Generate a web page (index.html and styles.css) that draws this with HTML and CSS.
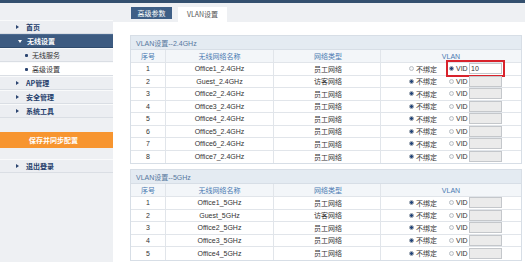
FILE: index.html
```html
<!DOCTYPE html>
<html lang="zh-CN">
<head>
<meta charset="utf-8">
<title>VLAN设置</title>
<link rel="stylesheet" href="styles.css">
</head>
<body>
<div class="topbar"></div>
<div class="layout">
  <aside class="sidebar">
    <nav class="menu">
      <div class="item"><span class="tri-r"></span>首页</div>
      <div class="item active"><span class="tri-d"></span>无线设置</div>
      <div class="sub"><span class="dot"></span>无线服务</div>
      <div class="sub current"><span class="dot"></span>高级设置</div>
      <div class="item"><span class="tri-r"></span>AP管理</div>
      <div class="item"><span class="tri-r"></span>安全管理</div>
      <div class="item"><span class="tri-r"></span>系统工具</div>
    </nav>
    <div class="save">保存并同步配置</div>
    <nav class="menu">
      <div class="item"><span class="tri-r"></span>退出登录</div>
    </nav>
  </aside>
  <main class="main">
    <div class="tabs">
      <span class="tab tab-dark">高级参数</span>
      <span class="tab tab-on">VLAN设置</span>
    </div>
    <div class="content">
      <section class="panel">
        <div class="ptitle">VLAN设置--2.4GHz</div>
        <div class="grid">
          <div class="row head"><span>序号</span><span>无线网络名称</span><span class="type">网络类型</span><span>VLAN</span></div>
          <div class="row"><span>1</span><span>Office1_2.4GHz</span><span class="type">员工网络</span><span class="vlan"><i class="radio"></i><em>不绑定</em><span class="vid hl"><i class="radio on"></i><em>VID</em><input class="box white" type="text" value="10"></span></span></div>
          <div class="row"><span>2</span><span>Guest_2.4GHz</span><span class="type">访客网络</span><span class="vlan"><i class="radio on"></i><em>不绑定</em><span class="vid"><i class="radio"></i><em>VID</em><input class="box" type="text"></span></span></div>
          <div class="row"><span>3</span><span>Office2_2.4GHz</span><span class="type">员工网络</span><span class="vlan"><i class="radio on"></i><em>不绑定</em><span class="vid"><i class="radio"></i><em>VID</em><input class="box" type="text"></span></span></div>
          <div class="row"><span>4</span><span>Office3_2.4GHz</span><span class="type">员工网络</span><span class="vlan"><i class="radio on"></i><em>不绑定</em><span class="vid"><i class="radio"></i><em>VID</em><input class="box" type="text"></span></span></div>
          <div class="row"><span>5</span><span>Office4_2.4GHz</span><span class="type">员工网络</span><span class="vlan"><i class="radio on"></i><em>不绑定</em><span class="vid"><i class="radio"></i><em>VID</em><input class="box" type="text"></span></span></div>
          <div class="row"><span>6</span><span>Office5_2.4GHz</span><span class="type">员工网络</span><span class="vlan"><i class="radio on"></i><em>不绑定</em><span class="vid"><i class="radio"></i><em>VID</em><input class="box" type="text"></span></span></div>
          <div class="row"><span>7</span><span>Office6_2.4GHz</span><span class="type">员工网络</span><span class="vlan"><i class="radio on"></i><em>不绑定</em><span class="vid"><i class="radio"></i><em>VID</em><input class="box" type="text"></span></span></div>
          <div class="row"><span>8</span><span>Office7_2.4GHz</span><span class="type">员工网络</span><span class="vlan"><i class="radio on"></i><em>不绑定</em><span class="vid"><i class="radio"></i><em>VID</em><input class="box" type="text"></span></span></div>
        </div>
      </section>
      <section class="panel">
        <div class="ptitle">VLAN设置--5GHz</div>
        <div class="grid">
          <div class="row head"><span>序号</span><span>无线网络名称</span><span class="type">网络类型</span><span>VLAN</span></div>
          <div class="row"><span>1</span><span>Office1_5GHz</span><span class="type">员工网络</span><span class="vlan"><i class="radio on"></i><em>不绑定</em><span class="vid"><i class="radio"></i><em>VID</em><input class="box" type="text"></span></span></div>
          <div class="row"><span>2</span><span>Guest_5GHz</span><span class="type">访客网络</span><span class="vlan"><i class="radio on"></i><em>不绑定</em><span class="vid"><i class="radio"></i><em>VID</em><input class="box" type="text"></span></span></div>
          <div class="row"><span>3</span><span>Office2_5GHz</span><span class="type">员工网络</span><span class="vlan"><i class="radio on"></i><em>不绑定</em><span class="vid"><i class="radio"></i><em>VID</em><input class="box" type="text"></span></span></div>
          <div class="row"><span>4</span><span>Office3_5GHz</span><span class="type">员工网络</span><span class="vlan"><i class="radio on"></i><em>不绑定</em><span class="vid"><i class="radio"></i><em>VID</em><input class="box" type="text"></span></span></div>
          <div class="row"><span>5</span><span>Office4_5GHz</span><span class="type">员工网络</span><span class="vlan"><i class="radio on"></i><em>不绑定</em><span class="vid"><i class="radio"></i><em>VID</em><input class="box" type="text"></span></span></div>
        </div>
      </section>
    </div>
  </main>
</div>
</body>
</html>
```

FILE: styles.css
```css
* { box-sizing: border-box; }
html, body { margin: 0; padding: 0; overflow: hidden; }
body {
  font-family: "Liberation Sans", "Noto Sans CJK SC", sans-serif;
  font-size: 7px;
  color: #333;
  background: #fff;
  width: 525px;
}
.topbar { height: 3px; background: #34506f; }
.layout { display: flex; align-items: stretch; min-height: 259px; }

.sidebar {
  width: 113px;
  flex: none;
  background: #eef0f3;
  padding-top: 17px;
}
.menu { display: flex; flex-direction: column; }
.item, .sub {
  height: 14px;
  display: flex;
  align-items: center;
  border-top: 1px solid #f9fafb;
  border-bottom: 1px solid #dadee4;
  background: #eceef2;
  color: #263f6c;
  font-weight: 700;
  font-family: "Noto Sans CJK SC", "Liberation Sans", sans-serif;
  padding-left: 16px;
}
.item.active { background: #3d5b81; color: #fff; border-top-color: #4d6b91; border-bottom-color: #2f4b6d; }
.sub { padding-left: 25px; font-weight: 400; color: #333; }
.sub.current { background: #fff; }
.tri-r {
  width: 0; height: 0;
  border-top: 2.5px solid transparent;
  border-bottom: 2.5px solid transparent;
  border-left: 3px solid #2b4470;
  margin-right: 7px;
}
.tri-d {
  width: 0; height: 0;
  border-left: 2.5px solid transparent;
  border-right: 2.5px solid transparent;
  border-top: 3px solid #fff;
  margin: 0 5px 0 2px;
}
.dot { width: 3px; height: 3px; background: #2b4470; border-radius: 1px; margin-right: 4px; }
.save {
  margin-top: 14px;
  margin-bottom: 11px;
  height: 16px;
  background: #f7952f;
  color: #fff;
  font-weight: 700;
  font-family: "Noto Sans CJK SC", sans-serif;
  display: flex;
  align-items: center;
  justify-content: center;
  padding-right: 6px;
}

.main { flex: 1; background: #fff; }
.tabs {
  height: 19px;
  background: #eef0f3;
  padding: 4px 0 0 18px;
  display: flex;
  align-items: flex-start;
  gap: 6px;
}
.tab {
  display: flex;
  align-items: center;
  justify-content: center;
  font-family: "Noto Sans CJK SC", sans-serif;
}
.tab-dark { width: 41px; height: 12px; background: #3e5f86; color: #fff; }
.tab-on { width: 49px; height: 15px; background: #fff; color: #555; padding-bottom: 2px; }

.content { padding: 13px 3px 0 17px; display: flex; flex-direction: column; gap: 5px; }
.panel { border: 1px solid #d7dee6; }
.ptitle {
  height: 14px;
  background: #e4ebf2;
  color: #56789e;
  padding-left: 5px;
  display: flex;
  align-items: center;
  border-bottom: 1px solid #d7dee6;
}
.grid { display: flex; flex-direction: column; }
.row {
  display: grid;
  grid-template-columns: 35px 108px 107px 1fr;
  height: 12.5px;
  border-bottom: 1px solid #e1e5ea;
}
.row:last-child { border-bottom: 0; }
.row > span {
  display: flex;
  align-items: center;
  justify-content: center;
  border-right: 1px solid #e1e5ea;
  white-space: nowrap;
}
.row > span:last-child { border-right: 0; }
.row > .type { justify-content: flex-start; padding-left: 40px; }
.head { height: 13px; background: #f3f6f9; color: #4a7ab2; }
.row > .vlan { justify-content: flex-start; padding-left: 28px; }
.vlan em { font-style: normal; margin-left: 2px; }
.vid { display: flex; align-items: center; margin-left: 12px; }
.vid em { width: 13px; }
.vid.hl { outline: 2px solid #d8232c; outline-offset: 1px; }
.radio {
  width: 5px; height: 5px;
  border-radius: 50%;
  border: 1px solid #b9bec4;
  background: #f4f5f6;
  flex: none;
}
.radio.on {
  border-color: #8d98a6;
  background: radial-gradient(circle, #22447a 0, #22447a 1.2px, #e3e7ec 1.8px);
}
.box {
  width: 33px;
  height: 11px;
  border: 1px solid #c4c7cb;
  background: #ebebeb;
  font: 7px "Liberation Sans", sans-serif;
  color: #333;
  padding: 0 1px;
  margin: 0;
  outline: none;
}
.box.white { background: #fff; }
```
